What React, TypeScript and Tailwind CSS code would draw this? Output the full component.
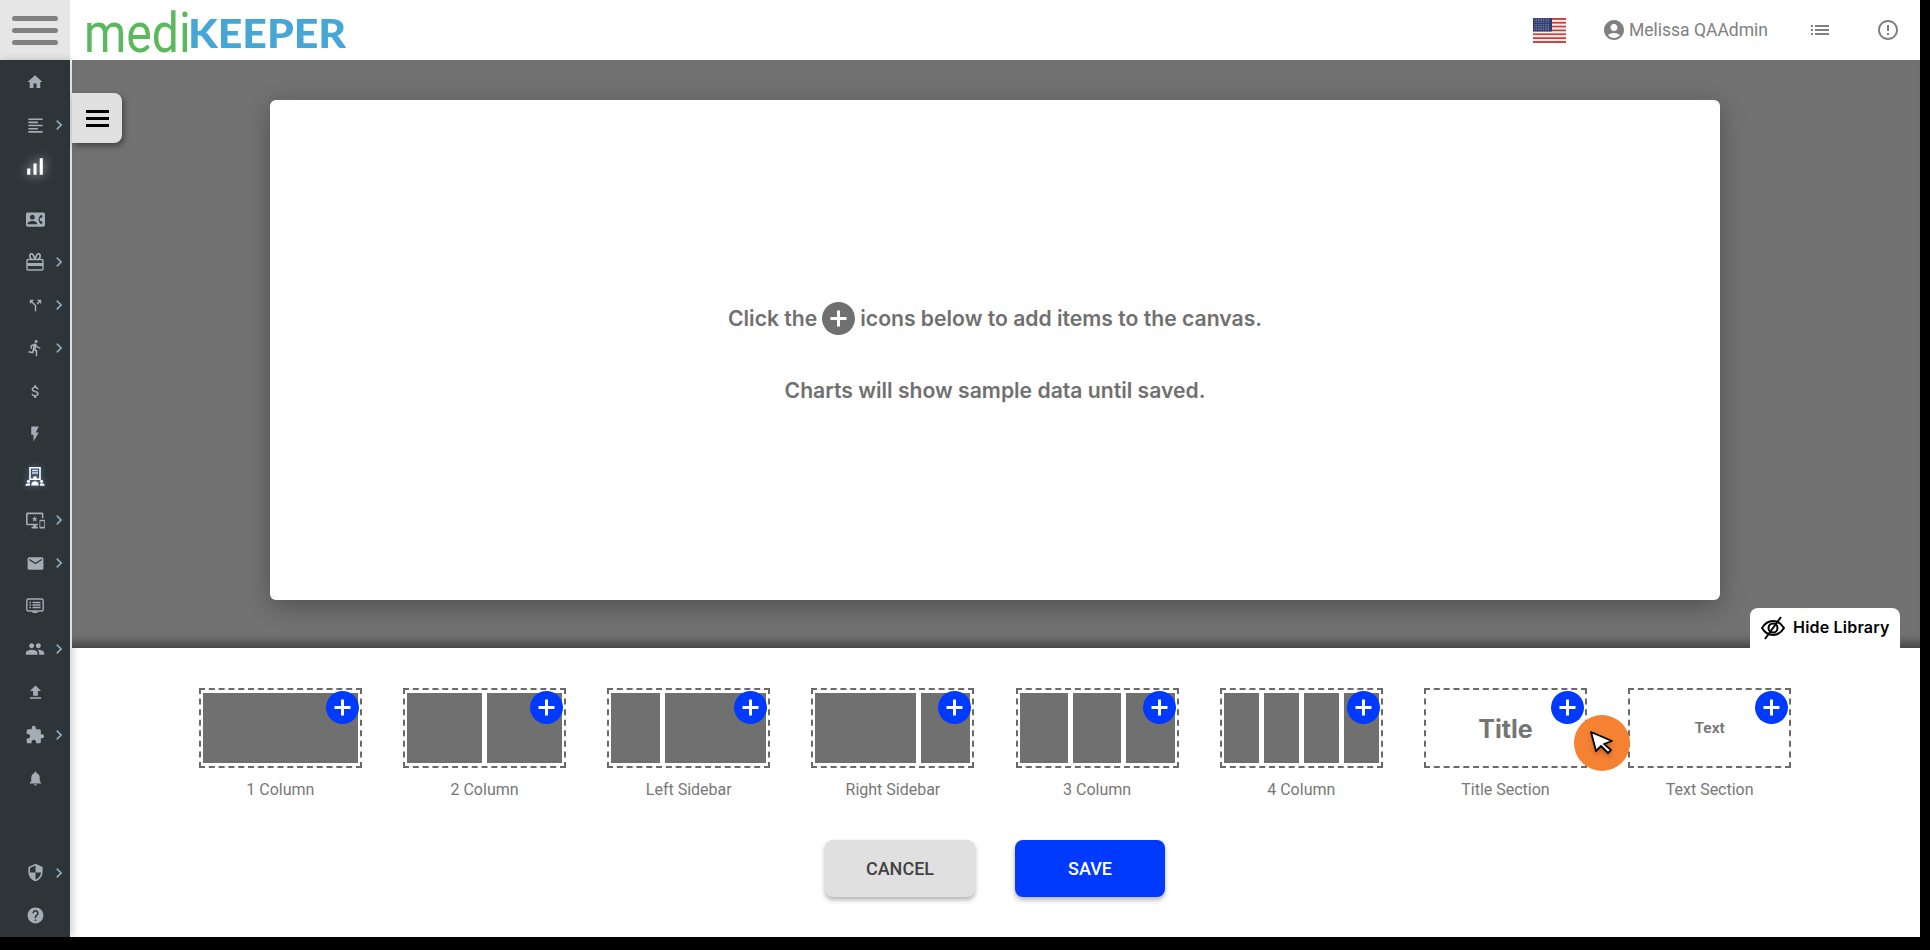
import React from "react";
import {
  MdHome, MdFormatAlignLeft, MdSignalCellularAlt, MdContactPhone, MdCallSplit, MdDirectionsRun,
  MdAttachMoney, MdFlashOn, MdImportantDevices, MdEmail, MdPeople, MdFileUpload, MdExtension,
  MdNotifications, MdSecurity, MdHelp, MdChevronRight, MdAccountCircle, MdList, MdErrorOutline,
} from "react-icons/md";

const roboto = "font-['Roboto',sans-serif]";
const inter = "font-['Inter',sans-serif]";

function GiftIcon() {
  return (
    <svg width="18" height="18" viewBox="0 0 18 18" fill="none">
      <path d="M2 6.500h14a1 1 0 0 1 1 1V16a1 1 0 0 1-1 1H2a1 1 0 0 1-1-1V7.500a1 1 0 0 1 1-1Z" stroke="currentColor" strokeWidth="1.400" />
      <rect x="1" y="10" width="16" height="3" fill="currentColor" />
      <path d="M9 6.500C8 2.500 6.500 0.300 5 0.800 3.200 1.400 3.500 5 5.800 6.500M9 6.500c1-4 2.500-6.200 4-5.700 1.800.6 1.500 4.200-.8 5.700" stroke="currentColor" strokeWidth="1.700" />
    </svg>
  );
}

function AdminIcon() {
  return (
    <svg width="20" height="20" viewBox="0 0 20 20" fill="none">
      <path d="M5 0.800h10v11.500H5z" stroke="#fff" strokeWidth="1.600" />
      <path d="M7 3.500h6M7 6h6" stroke="#cfe2fa" strokeWidth="1.300" />
      <circle cx="10" cy="11.200" r="2" fill="#fff" />
      <path d="M6.200 18.500c.2-2.800 1.500-4.200 3.800-4.200s3.600 1.400 3.800 4.200z" fill="#fff" />
      <circle cx="3.500" cy="14.300" r="1.600" fill="#fff" />
      <path d="M.3 18.800c.2-1.700 1.200-2.500 3.200-2.500l1.600.5-.3 2z" fill="#fff" />
      <circle cx="16.500" cy="14.300" r="1.600" fill="#fff" />
      <path d="M19.700 18.800c-.2-1.700-1.200-2.500-3.200-2.500l-1.600.5.300 2z" fill="#fff" />
    </svg>
  );
}

function ScreenListIcon() {
  return (
    <svg width="18" height="18" viewBox="0 0 18 18" fill="none">
      <rect x="0.800" y="2" width="16.400" height="12" rx="1.500" stroke="currentColor" strokeWidth="1.400" />
      <path d="M3.500 5.500h1.500M3.500 8h1.500M3.500 10.500h1.500M6.500 5.500h8M6.500 8h8M6.500 10.500h8" stroke="currentColor" strokeWidth="1.500" />
      <path d="M6.500 15.200h5" stroke="currentColor" strokeWidth="1.600" />
    </svg>
  );
}

type Item = { icon: React.ReactNode; chevron?: boolean; cls?: string };

const top: Item[] = [
  { icon: <MdHome size={18} /> },
  { icon: <MdFormatAlignLeft size={19} />, chevron: true },
  { icon: <MdSignalCellularAlt size={25} />, cls: "text-white drop-shadow-[0_0_6px_rgba(255,255,255,0.8)] -translate-y-[2px] -translate-x-[1px]" },
];
const middle: Item[] = [
  { icon: <MdContactPhone size={19} /> },
  { icon: <GiftIcon />, chevron: true },
  { icon: <MdCallSplit size={17} />, chevron: true },
  { icon: <MdDirectionsRun size={18} />, chevron: true },
  { icon: <MdAttachMoney size={17} /> },
  { icon: <MdFlashOn size={18} /> },
  { icon: <AdminIcon />, cls: "drop-shadow-[0_0_3px_rgba(130,180,255,0.6)]" },
  { icon: <MdImportantDevices size={19} />, chevron: true },
  { icon: <MdEmail size={19} />, chevron: true },
  { icon: <ScreenListIcon /> },
  { icon: <MdPeople size={20} />, chevron: true },
  { icon: <MdFileUpload size={19} /> },
  { icon: <MdExtension size={20} />, chevron: true },
  { icon: <MdNotifications size={17} /> },
];
const bottom: Item[] = [
  { icon: <MdSecurity size={19} />, chevron: true },
  { icon: <MdHelp size={19} /> },
];

function NavRow({ item }: { item: Item }) {
  return (
    <div className="relative flex h-[43px] w-[70px] shrink-0 items-center justify-center text-[#a3adb6]">
      <span className={`flex items-center justify-center ${item.cls ?? ""}`}>{item.icon}</span>
      {item.chevron && (
        <span className="absolute left-[49px] top-[11.500px] text-[#8ea6ba]">
          <MdChevronRight size={20} />
        </span>
      )}
    </div>
  );
}

function Flag() {
  const rows = Array.from({ length: 13 }, (_, i) => i);
  const stars: [number, number][] = [];
  for (let r = 0; r < 7; r++) for (let c = 0; c < 9; c++) stars.push([1 + c * 1.7, 1 + r * 1.8]);
  return (
    <svg width="33" height="25" viewBox="0 0 33 25" aria-hidden>
      {rows.map((i) => (
        <rect key={i} x="0" y={(i * 25) / 13} width="33" height={25 / 13 + 0.05} fill={i % 2 === 0 ? "#c9403a" : "#f4f0f0"} />
      ))}
      <rect x="0" y="0" width="19" height="13.500" fill="#2f3b6e" />
      {stars.map(([x, y], i) => (
        <circle key={i} cx={x + 1} cy={y} r="0.450" fill="#cfd3e6" />
      ))}
    </svg>
  );
}

function Plus() {
  return (
    <span className="absolute right-[1px] top-[1px] z-10 flex h-[33px] w-[33px] items-center justify-center rounded-full bg-[#0039ff]">
      <svg width="17" height="17" viewBox="0 0 17 17"><path d="M8.500 0.500v16M0.500 8.500h16" stroke="#fff" strokeWidth="3" /></svg>
    </span>
  );
}

function Tile({ label, children }: { label: string; children: React.ReactNode }) {
  return (
    <div className="flex w-[163px] shrink-0 flex-col items-center">
      <div className="relative flex h-[80px] w-[163px] border-2 border-dashed border-[#6a6a6a] px-[2px] py-[3px]">
        {children}
        <Plus />
      </div>
      <div className={`mt-[12px] h-[20px] text-[16px] leading-[20px] text-[#777] ${roboto}`}>{label}</div>
    </div>
  );
}

const Cell = ({ cls }: { cls: string }) => <div className={`h-full bg-[#707070] ${cls}`} />;

export default function App() {
  return (
    <div className="h-screen w-screen overflow-hidden bg-black">
      <div className="flex h-[937px] w-[1920px] flex-col bg-white">
        <header className="flex h-[60px] shrink-0 items-center bg-white">
          <div className="flex h-[60px] w-[70px] shrink-0 flex-col items-center justify-center gap-[7px] bg-[#e6e6e6]">
            <span className="h-[5px] w-[46px] rounded-full bg-[#808080]" />
            <span className="h-[5px] w-[46px] rounded-full bg-[#808080]" />
            <span className="h-[5px] w-[46px] rounded-full bg-[#808080]" />
          </div>
          <div className="ml-[14px] flex h-[60px] w-[263px] items-end pb-[5px]">
            <span className="-mr-[17px] block w-[121px] origin-bottom-left scale-x-[0.86] whitespace-nowrap font-['Roboto',sans-serif] text-[56px] font-normal leading-[44px] text-[#5cb85c]">medi</span>
            <span className="block w-[148px] origin-bottom-left scale-x-[1.07] whitespace-nowrap font-['Lato',sans-serif] text-[40px] font-black leading-[44px] text-[#46a6d6]">KEEPER</span>
          </div>
          <div className="ml-auto flex items-center text-[#808080]">
            <Flag />
            <span className="ml-[36px]"><MdAccountCircle size={24} /></span>
            <span className={`ml-[3px] text-[17.500px] ${roboto}`}>Melissa QAAdmin</span>
            <span className="ml-[40px]"><MdList size={24} /></span>
            <span className="ml-[44px] mr-[20px]"><MdErrorOutline size={24} /></span>
          </div>
        </header>

        <div className="flex min-h-0 flex-1">
          <nav className="relative z-10 flex w-[70px] shrink-0 flex-col bg-[#2d3538] pt-[0.500px] shadow-[3px_0_8px_rgba(0,0,0,0.18)]">
            {top.map((it, i) => <NavRow key={i} item={it} />)}
            <div className="h-[8px] shrink-0" />
            {middle.map((it, i) => <NavRow key={i} item={it} />)}
            <div className="mt-auto" />
            {bottom.map((it, i) => <NavRow key={i} item={it} />)}
          </nav>

          <main className="flex min-w-0 flex-1 flex-col bg-white">
            <section className="relative z-20 ml-[2px] h-[588px] shrink-0 bg-[#727272] pl-[198px] pt-[40px] shadow-[inset_0_-14px_10px_-8px_rgba(0,0,0,0.4)]">
              <button className="absolute left-0 top-[33px] flex h-[50px] w-[50px] items-center justify-center rounded-r-[8px] bg-[#e0e0e0] shadow-[2px_3px_6px_rgba(0,0,0,0.4)]">
                <span className="flex w-[23px] flex-col gap-[4px]">
                  <span className="h-[3px] bg-black" />
                  <span className="h-[3px] bg-black" />
                  <span className="h-[3px] bg-black" />
                </span>
              </button>

              <div className="flex h-[500px] w-[1450px] flex-col items-center rounded-[6px] bg-white pt-[200px] shadow-[0_6px_26px_rgba(0,0,0,0.3)]">
                <div className={`flex h-[37px] items-center text-[21.150px] font-semibold text-[#707070] ${inter}`}>
                  <span>Click the</span>
                  <span className="mx-[5px] flex h-[33px] w-[33px] items-center justify-center rounded-full bg-[#707070]">
                    <svg width="17" height="17" viewBox="0 0 17 17"><path d="M8.500 0.500v16M0.500 8.500h16" stroke="#fff" strokeWidth="3" /></svg>
                  </span>
                  <span>icons below to add items to the canvas.</span>
                </div>
                <div className={`mt-[36.500px] h-[34px] text-[21.150px] font-semibold leading-[34px] text-[#707070] ${inter}`}>
                  Charts will show sample data until saved.
                </div>
              </div>

              <div className="absolute bottom-0 right-[20px] flex h-[40px] w-[150px] items-center rounded-t-[8px] bg-white pl-[10px]">
                <svg width="26" height="26" viewBox="0 0 26 26" fill="none" stroke="#000" strokeWidth="2">
                  <path d="M2 13c3-5 7-7 11-7s8 2 11 7c-3 5-7 7-11 7S5 18 2 13Z" />
                  <circle cx="13" cy="13" r="4.500" />
                  <path d="M21 2 5 24" />
                </svg>
                <span className={`ml-[7px] mb-[2px] whitespace-nowrap text-[16px] font-semibold tracking-[0.2px] text-black ${inter}`}>Hide Library</span>
              </div>
            </section>

            <section className="relative flex flex-1 flex-col items-center pt-[40px]">
              <div className="flex gap-[41.200px]">
                <Tile label="1 Column"><Cell cls="flex-1" /></Tile>
                <Tile label="2 Column"><div className="flex h-full flex-1 gap-[5px]"><Cell cls="flex-1" /><Cell cls="flex-1" /></div></Tile>
                <Tile label="Left Sidebar"><div className="flex h-full flex-1 gap-[5px]"><Cell cls="w-[49px]" /><Cell cls="flex-1" /></div></Tile>
                <Tile label="Right Sidebar"><div className="flex h-full flex-1 gap-[5px]"><Cell cls="flex-1" /><Cell cls="w-[49px]" /></div></Tile>
                <Tile label="3 Column"><div className="flex h-full flex-1 gap-[5px]"><Cell cls="flex-1" /><Cell cls="flex-1" /><Cell cls="flex-1" /></div></Tile>
                <Tile label="4 Column"><div className="flex h-full flex-1 gap-[5px]"><Cell cls="flex-1" /><Cell cls="flex-1" /><Cell cls="flex-1" /><Cell cls="flex-1" /></div></Tile>
                <Tile label="Title Section">
                  <div className={`flex h-full flex-1 items-center justify-center pt-[3px] text-[25px] font-bold text-[#757575] ${inter}`}>Title</div>
                </Tile>
                <Tile label="Text Section">
                  <div className={`flex h-full flex-1 items-center justify-center pt-[2px] text-[15.500px] font-semibold text-[#757575] ${roboto}`}>Text</div>
                </Tile>
              </div>

              <div className={`mt-[40px] flex gap-[40px] text-[18px] font-medium ${roboto}`}>
                <button className="flex h-[57px] w-[150px] items-center justify-center rounded-[8px] bg-[#e0e0e0] text-[#424242] shadow-[0_3px_5px_rgba(0,0,0,0.3)]">CANCEL</button>
                <button className="flex h-[57px] w-[150px] items-center justify-center rounded-[8px] bg-[#0039ff] text-white shadow-[0_3px_5px_rgba(0,0,0,0.3)]">SAVE</button>
              </div>

              <div className="absolute left-[1504px] top-[67px] z-20 flex h-[56px] w-[56px] items-center justify-center rounded-full bg-[#f58233]">
                <svg width="28" height="28" viewBox="0 0 28 28" className="drop-shadow-[0_3px_2px_rgba(150,70,20,0.5)]">
                  <path d="M3 3 24 12 16 15 23 21 20 24 13 17 8 22Z" fill="#fff" stroke="#000" strokeWidth="1.800" strokeLinejoin="round" />
                </svg>
              </div>
            </section>
          </main>
        </div>
      </div>
    </div>
  );
}
